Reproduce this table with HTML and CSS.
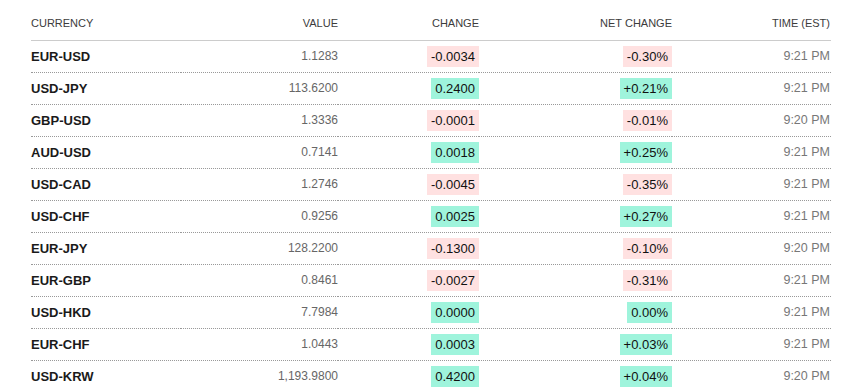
FILE: index.html
```html
<!DOCTYPE html>
<html lang="en">
<head>
    <meta charset="UTF-8">
    <meta name="viewport" content="width=device-width, initial-scale=1.0">
    <title>Currencies</title>
    <link rel="stylesheet" href="styles.css">
</head>
<body>
    <div class="container">
        <table class="quotes">
            <colgroup>
                <col class="col-name">
                <col class="col-value">
                <col class="col-change">
                <col class="col-net">
                <col class="col-time">
            </colgroup>
            <thead>
                <tr>
                    <th class="left">Currency</th>
                    <th>Value</th>
                    <th>Change</th>
                    <th>Net Change</th>
                    <th>Time (EST)</th>
                </tr>
            </thead>
            <tbody>
                <tr>
                    <td class="name">EUR-USD</td>
                    <td class="value">1.1283</td>
                    <td><span class="badge down">-0.0034</span></td>
                    <td><span class="badge down">-0.30%</span></td>
                    <td class="time">9:21 PM</td>
                </tr>
                <tr>
                    <td class="name">USD-JPY</td>
                    <td class="value">113.6200</td>
                    <td><span class="badge up">0.2400</span></td>
                    <td><span class="badge up">+0.21%</span></td>
                    <td class="time">9:21 PM</td>
                </tr>
                <tr>
                    <td class="name">GBP-USD</td>
                    <td class="value">1.3336</td>
                    <td><span class="badge down">-0.0001</span></td>
                    <td><span class="badge down">-0.01%</span></td>
                    <td class="time">9:20 PM</td>
                </tr>
                <tr>
                    <td class="name">AUD-USD</td>
                    <td class="value">0.7141</td>
                    <td><span class="badge up">0.0018</span></td>
                    <td><span class="badge up">+0.25%</span></td>
                    <td class="time">9:21 PM</td>
                </tr>
                <tr>
                    <td class="name">USD-CAD</td>
                    <td class="value">1.2746</td>
                    <td><span class="badge down">-0.0045</span></td>
                    <td><span class="badge down">-0.35%</span></td>
                    <td class="time">9:21 PM</td>
                </tr>
                <tr>
                    <td class="name">USD-CHF</td>
                    <td class="value">0.9256</td>
                    <td><span class="badge up">0.0025</span></td>
                    <td><span class="badge up">+0.27%</span></td>
                    <td class="time">9:21 PM</td>
                </tr>
                <tr>
                    <td class="name">EUR-JPY</td>
                    <td class="value">128.2200</td>
                    <td><span class="badge down">-0.1300</span></td>
                    <td><span class="badge down">-0.10%</span></td>
                    <td class="time">9:20 PM</td>
                </tr>
                <tr>
                    <td class="name">EUR-GBP</td>
                    <td class="value">0.8461</td>
                    <td><span class="badge down">-0.0027</span></td>
                    <td><span class="badge down">-0.31%</span></td>
                    <td class="time">9:21 PM</td>
                </tr>
                <tr>
                    <td class="name">USD-HKD</td>
                    <td class="value">7.7984</td>
                    <td><span class="badge up">0.0000</span></td>
                    <td><span class="badge up">0.00%</span></td>
                    <td class="time">9:21 PM</td>
                </tr>
                <tr>
                    <td class="name">EUR-CHF</td>
                    <td class="value">1.0443</td>
                    <td><span class="badge up">0.0003</span></td>
                    <td><span class="badge up">+0.03%</span></td>
                    <td class="time">9:21 PM</td>
                </tr>
                <tr>
                    <td class="name">USD-KRW</td>
                    <td class="value">1,193.9800</td>
                    <td><span class="badge up">0.4200</span></td>
                    <td><span class="badge up">+0.04%</span></td>
                    <td class="time">9:20 PM</td>
                </tr>
            </tbody>
        </table>
    </div>
</body>
</html>
```

FILE: styles.css
```css
* {
    margin: 0;
    padding: 0;
    box-sizing: border-box;
}

body {
    font-family: 'Liberation Sans', Arial, sans-serif;
    background: #fff;
    color: #222;
}

.container {
    padding-left: 31px;
    width: 831px;
}

.quotes {
    width: 800px;
    border-collapse: collapse;
    table-layout: fixed;
}

.col-name { width: 150px; }
.col-value { width: 157px; }
.col-change { width: 141px; }
.col-net { width: 193px; }
.col-time { width: 159px; }

.quotes th {
    font-size: 11px;
    line-height: 13px;
    font-weight: normal;
    color: #3c3c3c;
    text-transform: uppercase;
    text-align: right;
    padding: 17px 0 10px;
    border-bottom: 1px solid #ccc;
}

.quotes th:last-child {
    padding-right: 1px;
}

.quotes th.left {
    text-align: left;
}

.quotes td {
    font-size: 13px;
    line-height: 15px;
    text-align: right;
    padding: 5px 0;
    height: 31px;
    vertical-align: middle;
}

.quotes tbody tr {
    border-bottom: 1px dotted #999;
}

.quotes tbody tr:last-child {
    border-bottom: none;
}

.quotes td.name {
    text-align: left;
    font-weight: bold;
    color: #1a1a1a;
}

.quotes td.value {
    font-size: 12px;
    color: #666;
}

.quotes td.time {
    font-size: 12.5px;
    color: #777;
    padding-right: 1px;
}

.badge {
    display: inline-block;
    padding: 3px 4px;
    color: #111;
}

.badge.down {
    background: #ffe1e1;
}

.badge.up {
    background: #9ff4dc;
}
```
